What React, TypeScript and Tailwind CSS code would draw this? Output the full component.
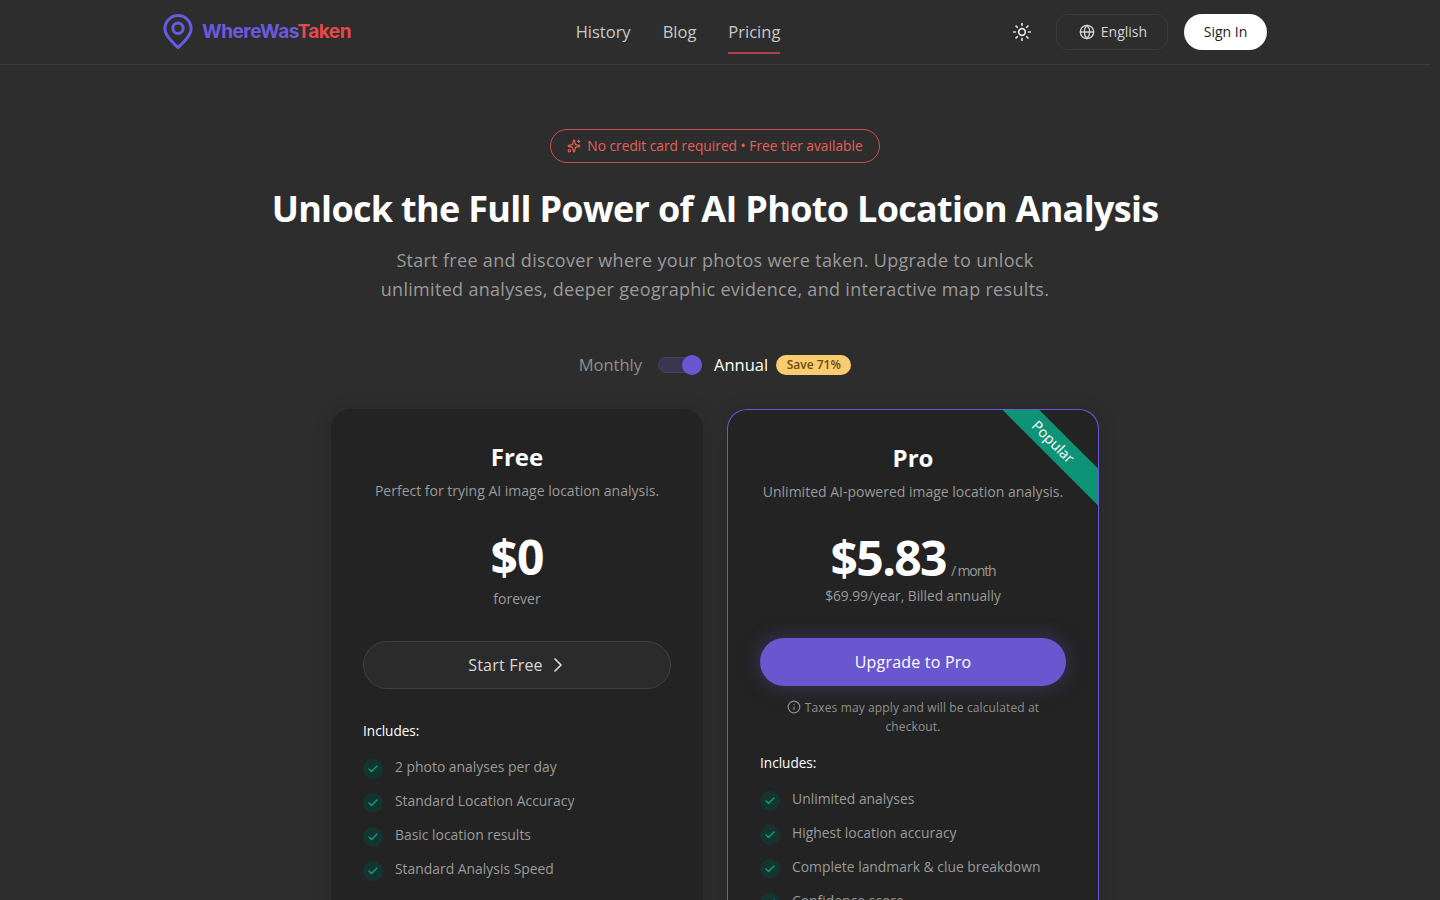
import { ChevronRight, Check, Globe, Info, Sparkles, Sun } from "lucide-react";

const freeFeatures = [
  "2 photo analyses per day",
  "Standard Location Accuracy",
  "Basic location results",
  "Standard Analysis Speed",
];

const proFeatures = [
  "Unlimited analyses",
  "Highest location accuracy",
  "Complete landmark & clue breakdown",
  "Confidence score",
];

const Logo = () => (
  <div className="flex items-center gap-[9px]">
    <svg width="30" height="36" viewBox="0 0 32 38" fill="none" stroke="#6a5adf" strokeWidth="3.2">
      <path d="M16 35.5C16 35.5 2 24 2 15.5a14 14 0 0 1 28 0C30 24 16 35.5 16 35.5Z" strokeLinejoin="round" />
      <circle cx="16" cy="15" r="5.5" />
    </svg>
    <span className="mt-[1px] text-[19px] font-bold tracking-[-0.5px] font-['Inter',sans-serif]">
      <span className="text-[#6a5adf]">WhereWas</span>
      <span className="text-[#e5484d]">Taken</span>
    </span>
  </div>
);

const Header = () => (
  <header className="h-[65px] border-b border-[#3a3a3a] bg-[#2d2d2d]">
    <div className="mx-auto flex h-full w-[1120px] items-center justify-between px-[8px]">
      <Logo />
      <nav className="mr-[7px] flex gap-8 text-[16.5px] leading-6 text-[#c8c8c8]">
        <a className="py-2">History</a>
        <a className="py-2">Blog</a>
        <a className="relative py-2">
          Pricing
          <span className="absolute right-0 bottom-[-2px] left-0 h-[2px] bg-[#a8434a]" />
        </a>
      </nav>
      <div className="flex items-center">
        <Sun className="mr-6 h-5 w-5 text-[#e5e5e5]" />
        <button className="mr-[16px] flex h-9 w-[112px] items-center justify-center gap-[6px] rounded-xl border border-[#3a3a3a] pl-[2px] text-sm text-[#d4d4d4]">
          <Globe className="h-4 w-4" />
          English
        </button>
        <button className="h-9 w-[83px] rounded-full bg-white text-sm text-[#222]">Sign In</button>
      </div>
    </div>
  </header>
);

const FeatureList = ({ items }: { items: string[] }) => (
  <ul className="mt-3 flex flex-col gap-[10px]">
    {items.map((item) => (
      <li key={item} className="flex h-6 items-center gap-3 text-[13.9px] text-[#9a9a9a]">
        <span className="mt-[3px] flex h-5 w-5 shrink-0 items-center justify-center rounded-full bg-[#14352f]">
          <Check className="h-3 w-3 text-[#10a37f]" strokeWidth={2.5} />
        </span>
        {item}
      </li>
    ))}
  </ul>
);

const FreeCard = () => (
  <div className="w-[372px] rounded-t-[20px] bg-[#232323] px-8 pt-[30px] pb-8 shadow-[0_0_20px_rgba(0,0,0,0.12)]">
    <h3 className="text-center text-[24px] leading-9 font-bold text-white">Free</h3>
    <p className="mt-[4px] text-center text-sm leading-6 text-[#9a9a9a]">
      Perfect for trying AI image location analysis.
    </p>
    <div className="mt-6 text-center text-[48px] leading-[60px] font-bold tracking-[-1px] text-white">$0</div>
    <div className="text-center text-sm leading-6 text-[#9a9a9a]">forever</div>
    <button className="mt-[30px] flex h-12 w-full items-center justify-center gap-[3px] rounded-full border border-[#3f3f3f] bg-[#2b2b2b] pl-[4px] text-base tracking-[0.2px] text-[#d9d9d9]">
      Start Free
      <ChevronRight className="h-6 w-6" strokeWidth={1.75} />
    </button>
    <div className="mt-[30px] text-[13.6px] leading-6 text-white">Includes:</div>
    <FeatureList items={freeFeatures} />
  </div>
);

const ProCard = () => (
  <div className="relative w-[372px] overflow-hidden rounded-t-[20px] border border-b-0 border-[#6a56d6] bg-[#232323] px-8 pt-[30px] pb-8 shadow-[0_0_20px_rgba(0,0,0,0.12)]">
    <div className="absolute top-[19px] right-[-40px] flex h-[26px] w-[170px] rotate-45 items-center justify-center bg-[#0e9377] text-[14.5px] font-medium text-white">
      Popular
    </div>
    <h3 className="text-center text-[24px] leading-9 font-bold text-white">Pro</h3>
    <p className="mt-[4px] text-center text-sm leading-6 text-[#9a9a9a]">
      Unlimited AI-powered image location analysis.
    </p>
    <div className="mt-[27px] flex items-end justify-center">
      <span className="text-[48px] leading-[54px] font-bold tracking-[-1.6px] text-white">$5.83</span>
      <span className="mb-[4px] ml-[5px] text-sm leading-5 tracking-[-1.1px] text-[#9a9a9a]">/ month</span>
    </div>
    <div className="text-center text-[13.7px] leading-[22px] text-[#9a9a9a]">$69.99/year, Billed annually</div>
    <button className="mt-[31px] h-12 w-full rounded-full bg-[#6a56cf] text-base tracking-[0.2px] text-white shadow-[0_0_20px_rgba(106,86,207,0.35)]">
      Upgrade to Pro
    </button>
    <p className="mx-auto mt-[12px] w-[272px] text-center text-xs leading-[19px] tracking-[0.12px] text-[#8f8f8f]">
      <Info className="mr-1 inline h-[14px] w-[14px] align-[-2px]" />
      Taxes may apply and will be calculated at checkout.
    </p>
    <div className="mt-[15px] text-[13.6px] leading-6 text-white">Includes:</div>
    <FeatureList items={proFeatures} />
  </div>
);

export default function App() {
  return (
    <div className="h-[900px] overflow-hidden bg-[#2d2d2d] font-['Open_Sans',sans-serif]">
      <div className="w-[1430px]">
        <Header />
        <main className="flex flex-col items-center pt-[64px]">
          <div className="flex h-[34px] w-[330px] items-center justify-center gap-[6px] rounded-full border border-[#c9504c] text-[13.75px] text-[#e5605a]">
            <Sparkles className="h-[14px] w-[14px]" />
            No credit card required • Free tier available
          </div>
          <h1 className="mt-[20px] text-[36px] leading-[52px] font-bold tracking-[-0.7px] text-white">
            Unlock the Full Power of AI Photo Location Analysis
          </h1>
          <p className="mt-[11px] w-[720px] text-center text-lg leading-[29px] tracking-[0.31px] text-[#9a9a9a]">
            Start free and discover where your photos were taken. Upgrade to unlock unlimited analyses, deeper geographic evidence, and interactive map results.
          </p>
          <div className="mt-[41px] flex h-[40px] items-center">
            <span className="text-[16.5px] text-[#8f8f8f]">Monthly</span>
            <div className="relative mr-3 ml-4 h-4 w-11 rounded-full border border-[#45405f] bg-[#3a3650]">
              <span className="absolute top-[-3px] right-[-1px] h-5 w-5 rounded-full bg-[#6a56cf]" />
            </div>
            <span className="text-[16.5px] font-medium text-white">Annual</span>
            <span className="ml-2 flex h-5 items-center rounded-full bg-[#f8cc6f] px-[10.5px] text-xs font-semibold text-[#6b4a10]">
              Save 71%
            </span>
          </div>
          <div className="mt-[24px] flex gap-6">
            <FreeCard />
            <ProCard />
          </div>
        </main>
      </div>
    </div>
  );
}
